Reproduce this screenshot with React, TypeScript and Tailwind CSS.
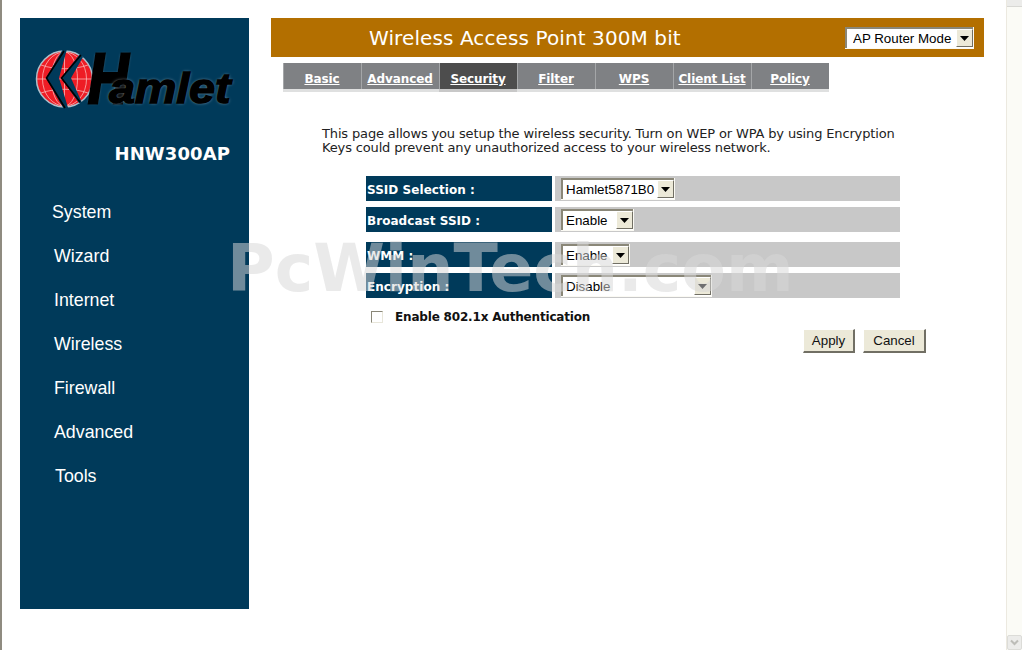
import React from "react";

const Sel = ({ value, w, disabled, pl = "pl-[3px]" }: { value: string; w: string; disabled?: boolean; pl?: string }) => (
  <div className={`relative mt-[1px] h-[22px] ${w} bg-white border-r border-b border-[#fbfaf4]`}>
    <div className="h-full border-t-2 border-l-2 border-[#8a8778] flex items-center">
      <select
        disabled={disabled}
        defaultValue={value}
        className={`appearance-none w-full h-[18px] bg-transparent border-0 outline-none ${pl} pr-[18px] text-[13.33px] leading-[18px] text-black opacity-100 font-['Liberation_Sans',sans-serif]`}
      >
        <option>{value}</option>
      </select>
    </div>
    <div className="absolute right-0 top-[2px] w-[17px] h-[18px] bg-[#ece9d8] border-t border-l border-t-white border-l-white border-r border-b border-r-[#716f64] border-b-[#716f64] flex items-center justify-center pointer-events-none">
      <svg width="9" height="5" viewBox="0 0 9 5">
        <path d="M0 0h9L4.500 5z" fill="#000" />
      </svg>
    </div>
  </div>
);

const Row = ({ label, children, cls }: { label: string; children: React.ReactNode; cls: string }) => (
  <div className={`flex h-[25px] gap-[3px] ${cls}`}>
    <div className="w-[186px] bg-[#003a5a] pl-[1px] pt-[2px] flex items-center text-white text-[12px] tracking-[0.05px] font-bold font-['DejaVu_Sans',sans-serif]">
      {label}
    </div>
    <div className="w-[345px] bg-[#c8c8c8] pl-[6px] flex items-center">{children}</div>
  </div>
);

const Btn = ({ children, w }: { children: React.ReactNode; w: string }) => (
  <button className={`${w} h-[24px] bg-[#ece9d8] border-t border-l border-white border-r-2 border-b-2 border-r-[#716f64] border-b-[#716f64] text-[13.33px] text-[#111] font-['Liberation_Sans',sans-serif] flex items-center justify-center`}>
    {children}
  </button>
);

const tabs = ["Basic", "Advanced", "Security", "Filter", "WPS", "Client List", "Policy"];
const nav: [string, string][] = [
  ["System", "ml-[32px]"],
  ["Wizard", "ml-[34px]"],
  ["Internet", "ml-[34px]"],
  ["Wireless", "ml-[34px]"],
  ["Firewall", "ml-[34px]"],
  ["Advanced", "ml-[34px]"],
  ["Tools", "ml-[35px]"],
];

const Logo = () => (
  <div className="relative h-[60px] w-[200px] ml-[15px]">
    <svg width="70" height="68" viewBox="0 0 70 68" className="absolute left-[-5px] top-[-4px]">
      <circle cx="34.500" cy="33" r="28" fill="#ee1c25" stroke="#aebfca" strokeWidth="1.5" />
      <g stroke="#f9b5b5" strokeWidth="0.8" fill="none">
        <ellipse cx="34.500" cy="33" rx="13" ry="27" />
        <ellipse cx="34.500" cy="33" rx="22" ry="27" />
        <path d="M34.500 6v54M7 33h55M11 19c14 5 33 5 47 0M11 47c14-5 33-5 47 0" />
      </g>
      <path d="M33 3 16 32l19 33h4L29 32 37 3z" fill="#003a5a" />
      <path d="M50 8 31 32l18 25h3L41 32 53 11z" fill="#003a5a" />
      <path d="M34 5 16.500 32 35 62M51 9 31.500 32 50 56" fill="none" stroke="#000" strokeWidth="1.6" />
    </svg>
    <div className="absolute left-[53px] top-[-4px] flex items-baseline italic font-bold text-black font-['Liberation_Sans',sans-serif] [text-shadow:0_0_3px_#a9bcc9]">
      <span className="text-[70px] leading-[66px] inline-block origin-left scale-x-[0.8] w-[21px] [-webkit-text-stroke:3px_#000]">H</span>
      <span className="text-[43px] leading-[66px] inline-block origin-left scale-x-[1.09] -tracking-[0.2px] [-webkit-text-stroke:1.4px_#000]">amlet</span>
    </div>
  </div>
);

export default function App() {
  return (
    <div className="relative flex h-[650px] w-[1022px] overflow-hidden bg-white border-l-2 border-[#8f8b80] font-['DejaVu_Sans',sans-serif]">
      <aside className="mt-[18px] ml-[18px] h-[591px] w-[229px] shrink-0 bg-[#003a5a] flex flex-col">
        <div className="mt-[32px]">
          <Logo />
        </div>
        <div className="mt-[34px] pr-[19px] text-right text-white text-[18px] tracking-[0.1px] font-bold leading-[20px]">HNW300AP</div>
        <nav className="mt-[26px] flex flex-col">
          {nav.map(([n, m]) => (
            <div key={n} className={`${m} h-[44px] leading-[44px] text-white text-[17.8px] font-['Liberation_Sans',sans-serif]`}>
              {n}
            </div>
          ))}
        </nav>
      </aside>

      <main className="ml-[22px] mt-[18px] w-[735px] shrink-0">
        <div className="w-[713px] h-[39px] bg-[#b36f00] flex items-center">
          <div className="ml-[98px] w-[476px] text-white text-[20px] tracking-[0.1px]">Wireless Access Point 300M bit</div>
          <Sel value="AP Router Mode" w="w-[129px]" pl="pl-[6px]" />
        </div>

        <div className="ml-[12px] mt-[6px] w-[546px] h-[29px] flex bg-[#dfe0e0]">
          {tabs.map((t) => (
            <div
              key={t}
              className={`w-[78px] h-[29px] flex items-start ${t === "Security" ? "bg-[#c8c8c8]" : ""}`}
            >
              <div
                className={`w-full h-[26px] pt-[6px] pr-[1px] flex items-center justify-center text-white text-[12px] tracking-[-0.1px] font-bold underline border-l border-[#a4a6a8] ${
                  t === "Security" ? "bg-[#4d4d4d]" : "bg-[#7f8184]"
                }`}
              >
                {t}
              </div>
            </div>
          ))}
        </div>

        <p className="ml-[51px] mt-[35px] w-[600px] text-[13px] leading-[14px] text-[#222] tracking-[-0.145px]">
          This page allows you setup the wireless security. Turn on WEP or WPA by using Encryption
          <br />
          Keys could prevent any unauthorized access to your wireless network.
        </p>

        <div className="ml-[95px] mt-[21px] w-[534px]">
          <Row label="SSID Selection :" cls="">
            <Sel value="Hamlet5871B0" w="w-[114px]" />
          </Row>
          <Row label="Broadcast SSID :" cls="mt-[6px]">
            <Sel value="Enable" w="w-[73px]" />
          </Row>
          <Row label="WMM :" cls="mt-[10px]">
            <Sel value="Enable" w="w-[69px]" />
          </Row>
          <Row label="Encryption :" cls="mt-[6px]">
            <Sel value="Disable" w="w-[151px]" />
          </Row>
        </div>

        <label className="ml-[100px] mt-[12px] flex items-center h-[13px]">
          <span className="w-[12px] h-[12px] bg-white border border-[#8a8778] border-r-[#e8e6da] border-b-[#e8e6da] shrink-0" />
          <span className="ml-[12px] text-[12px] tracking-[-0.18px] font-bold text-[#111] whitespace-nowrap">Enable 802.1x Authentication</span>
        </label>

        <div className="mt-[6px] ml-[532px] flex gap-[8px]">
          <Btn w="w-[52px]">Apply</Btn>
          <Btn w="w-[63px]">Cancel</Btn>
        </div>
      </main>

      <div className="ml-auto w-[16px] h-full bg-[#fbfbf6] border-l border-[#ece9e0] flex flex-col justify-between">
        <div className="h-[7px] bg-[#ececea] border-b border-[#d8d8d4]" />
        <div className="h-[15px] bg-[#ececea] border border-[#dcdcd8] rounded-[2px] flex items-center justify-center">
          <svg width="9" height="7" viewBox="0 0 9 7">
            <path d="M1 1.500 4.500 5 8 1.500" fill="none" stroke="#bdbdb8" strokeWidth="2" />
          </svg>
        </div>
      </div>

      <div className="absolute left-[225px] top-[231px] text-[65px] leading-[76px] font-bold whitespace-nowrap text-[rgba(215,215,215,0.52)] pointer-events-none">
        PcWinTech.com
      </div>
    </div>
  );
}
